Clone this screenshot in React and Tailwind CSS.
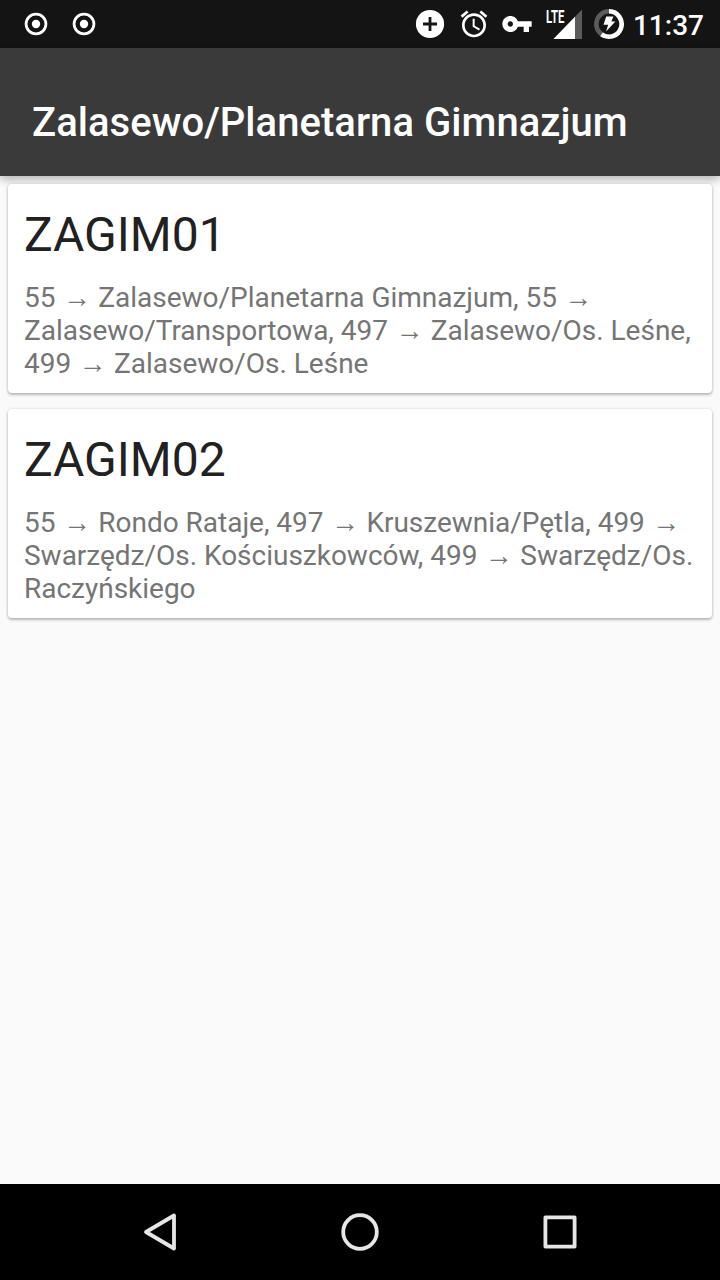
const STOPS = [
  {
    id: "ZAGIM01",
    lines: [
      "55 → Zalasewo/Planetarna Gimnazjum, 55 →",
      "Zalasewo/Transportowa, 497 → Zalasewo/Os. Leśne,",
      "499 → Zalasewo/Os. Leśne",
    ],
  },
  {
    id: "ZAGIM02",
    lines: [
      "55 → Rondo Rataje, 497 → Kruszewnia/Pętla, 499 →",
      "Swarzędz/Os. Kościuszkowców, 499 → Swarzędz/Os.",
      "Raczyńskiego",
    ],
  },
];

function RecordIcon() {
  return (
    <svg className="h-6 w-6" viewBox="0 0 24 24">
      <circle cx="12" cy="12" r="9.9" fill="none" stroke="#fff" strokeWidth="2.8" />
      <circle cx="12" cy="12" r="4.2" fill="#fff" />
    </svg>
  );
}

function StatusBar() {
  return (
    <div className="flex h-12 shrink-0 items-center bg-[#141414] pr-4 pl-6 text-white">
      <div className="flex gap-6">
        <RecordIcon />
        <RecordIcon />
      </div>
      <div className="ml-auto flex items-center">
        <svg className="mr-3 h-8 w-8" viewBox="0 0 32 32">
          <circle cx="16" cy="16" r="14.1" fill="#fff" />
          <path d="M16 9v14M9 16h14" stroke="#141414" strokeWidth="2.8" />
        </svg>
        <svg className="mr-[11px] h-8 w-8" viewBox="0 0 24 24" fill="#fff">
          <path d="M22 5.72l-4.6-3.86-1.29 1.53 4.6 3.86L22 5.72zM7.88 3.39L6.6 1.86 2 5.71l1.29 1.53 4.59-3.85zM12.5 8H11v6l4.75 2.85.75-1.23-4-2.37V8zM12 4c-4.97 0-9 4.03-9 9s4.02 9 9 9c4.97 0 9-4.03 9-9s-4.03-9-9-9zm0 16c-3.87 0-7-3.13-7-7s3.13-7 7-7 7 3.13 7 7-3.13 7-7 7z" />
        </svg>
        <svg className="mr-[13px] h-8 w-8" viewBox="0 0 24 24" fill="#fff">
          <path d="M12.65 10C11.83 7.67 9.61 6 7 6c-3.31 0-6 2.69-6 6s2.69 6 6 6c2.61 0 4.83-1.67 5.65-4H17v4h4v-4h2v-4H12.65zM7 14c-1.1 0-2-.9-2-2s.9-2 2-2 2 .9 2 2-.9 2-2 2z" />
        </svg>
        <div className="relative mr-[11px] h-8 w-9">
          <svg className="h-8 w-9" viewBox="0 0 36 32">
            <path d="M36 1.5V31H7.5z" fill="#5b5b5b" />
            <path d="M29 8.8V31H7.5z" fill="#fff" />
          </svg>
          <span className="absolute top-0 left-0 origin-left scale-x-[0.63] font-['Roboto',sans-serif] text-[18px] leading-[17px] font-bold">LTE</span>
        </div>
        <svg className="mr-2 h-8 w-8" viewBox="0 0 32 32">
          <circle cx="16" cy="16" r="12.7" fill="none" stroke="#5b5b5b" strokeWidth="4.6" />
          <path d="M16 3.3A12.7 12.7 0 1 1 8.5 26.3" fill="none" stroke="#fff" strokeWidth="4.6" />
          <path d="M13.2 8.5h7.2l-2 5h4L13 23.5l2.2-6.7h-4.7z" fill="#fff" />
        </svg>
        <span className="pt-[3px] text-[28px] leading-8 font-medium">11:37</span>
      </div>
    </div>
  );
}

function RouteLine({ text }) {
  const parts = text.split("→");
  return (
    <div className="h-[33px] whitespace-pre">
      {parts.map((part, i) => (
        <span key={i}>
          {i > 0 && (
            <span className="inline-block w-[29px] text-center font-['Liberation_Sans',sans-serif] text-[28px] leading-none">→</span>
          )}
          {part}
        </span>
      ))}
    </div>
  );
}

function StopCard({ stop }) {
  return (
    <article className="h-[209px] rounded-[4px] bg-white px-4 pt-[23px] shadow-[0_2px_3px_rgba(0,0,0,0.24),0_0_3px_rgba(0,0,0,0.16)]">
      <h2 className="text-[48px] leading-[56px] text-[#212121]">{stop.id}</h2>
      <div className="mt-[18px] text-[28px] leading-[33px] tracking-[-0.015px] text-[#757575]">
        {stop.lines.map((line) => (
          <RouteLine key={line} text={line} />
        ))}
      </div>
    </article>
  );
}

function NavigationBar() {
  return (
    <nav className="flex h-24 shrink-0 items-center justify-center gap-[152px] bg-black">
      <svg className="h-12 w-12" viewBox="0 0 48 48">
        <path d="M38 7.5v33L10 24z" fill="none" stroke="#e6e6e6" strokeWidth="3.8" strokeLinejoin="round" />
      </svg>
      <svg className="h-12 w-12" viewBox="0 0 48 48">
        <circle cx="24" cy="24" r="16.8" fill="none" stroke="#e6e6e6" strokeWidth="3.8" />
      </svg>
      <svg className="h-12 w-12" viewBox="0 0 48 48">
        <rect x="9.4" y="9.4" width="29.2" height="29.2" fill="none" stroke="#e6e6e6" strokeWidth="3.8" strokeLinejoin="round" />
      </svg>
    </nav>
  );
}

export default function App() {
  return (
    <div className="flex h-[1280px] w-[720px] flex-col overflow-hidden bg-[#fafafa] font-['Roboto',sans-serif]">
      <StatusBar />
      <header className="flex h-32 shrink-0 items-center bg-[#3a3a3a] px-8 pt-[22px] shadow-[0_4px_8px_rgba(0,0,0,0.26)]">
        <h1 className="text-[40px] leading-[48px] font-medium tracking-[0.04px] text-white">Zalasewo/Planetarna Gimnazjum</h1>
      </header>
      <main className="flex flex-1 flex-col gap-4 px-2 pt-2">
        {STOPS.map((stop) => (
          <StopCard key={stop.id} stop={stop} />
        ))}
      </main>
      <NavigationBar />
    </div>
  );
}
